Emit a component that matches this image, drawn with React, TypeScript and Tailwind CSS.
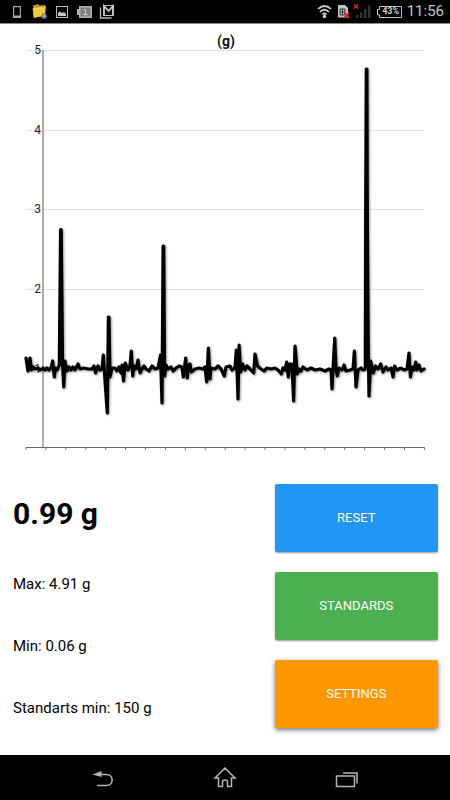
import clsx from "clsx";

const trace: [number, number][] = [
  [26, 358], [28, 371], [30, 358], [31.5, 370], [33, 367], [35, 369], [38, 368], [40, 370], [43, 368], [45, 370], [47, 368], [49, 370],
  [51, 368], [52.7, 361], [54.3, 377], [55.5, 368], [57, 370], [59.3, 365], [60.6, 229.5], [61.2, 229.5], [62.6, 365], [63.7, 387],
  [65, 361], [67, 371], [69, 367], [71, 370], [73, 367], [75, 370], [78, 364], [80, 369], [84, 368], [88, 369], [92, 369], [94, 366],
  [95.5, 373], [98, 366], [100, 370], [102, 369], [103.3, 355], [105.3, 385], [107.3, 413], [108.4, 317], [109, 317], [110, 377],
  [112, 368], [115, 368], [117, 371], [119, 367], [121, 373], [122, 365], [123.5, 381], [125.3, 363], [128, 370], [130, 366],
  [131.3, 351], [132.7, 376], [134, 366], [136, 369], [138, 360], [140, 373], [142, 369], [144, 366], [146, 369], [149, 371],
  [152, 366], [155, 369], [158, 368], [160.5, 355], [162, 403], [163.1, 246], [163.7, 246], [164.6, 376], [166, 365], [168, 369],
  [171, 367], [173, 371], [176, 368], [179, 366], [182, 367], [183.3, 377], [185.7, 358], [187.2, 378], [188.5, 366], [190, 364],
  [191.3, 372], [195, 369], [199, 368], [203, 369], [205, 367], [206.7, 382], [208.4, 348], [210, 379], [211, 368], [215, 369],
  [218, 366], [221, 369], [224.3, 376], [226, 367], [230, 366], [232, 370], [235, 368], [236.3, 350], [238, 399], [239.1, 345],
  [240.7, 372], [242.7, 364], [245, 370], [247, 366], [250, 369], [253.7, 373], [255, 354], [257.5, 366], [261, 369], [264, 371],
  [267, 368], [271, 369], [275, 368], [278, 370], [281.3, 374], [283, 368], [285, 370], [286.7, 362], [288.3, 377], [290, 364],
  [292, 364], [293.6, 401], [295, 346], [297.3, 374], [299, 369], [301, 371], [303, 367], [307, 370], [311, 368], [315, 370],
  [320, 369], [325, 371], [329, 369], [331, 370], [332, 389], [334.7, 338], [336, 369], [337.3, 376], [339, 368], [342, 370],
  [344, 365], [346, 371], [350, 370], [353, 369], [354.4, 351], [356, 387], [358, 370], [361, 368], [363, 370], [365.3, 369],
  [365.6, 230], [366.3, 69], [366.9, 69], [367.4, 230], [368.2, 340], [369, 396], [370.7, 361], [373.3, 373], [375.5, 366],
  [378, 369], [380.7, 364], [383, 372], [386, 367], [388, 370], [391, 368], [393, 377], [394.5, 366], [397, 370], [401, 368],
  [404, 370], [407, 369], [409, 353], [410.4, 377], [412, 367], [414, 370], [415.7, 362], [417, 370], [419, 365], [421, 371], [424, 369],
];

const gridLines = [
  { label: "5", y: 50 },
  { label: "4", y: 130 },
  { label: "3", y: 209 },
  { label: "2", y: 289 },
  { label: "1", y: 369 },
];

const ticks = Array.from({ length: 21 }, (_, i) => 26 + i * 19.92);

const readings = ["Max: 4.91 g", "Min: 0.06 g", "Standarts min: 150 g"];

const actions = [
  { label: "RESET", color: "bg-[#2196f3]", shadow: "shadow-[0_1px_2px_rgba(0,0,0,0.4)]" },
  { label: "STANDARDS", color: "bg-[#4caf50]", shadow: "shadow-[0_1px_2px_rgba(0,0,0,0.4)]" },
  { label: "SETTINGS", color: "bg-[#ff9800]", shadow: "shadow-[0_2px_5px_rgba(0,0,0,0.55)]" },
];

const StatusBar = () => {
  return (
    <header className="flex h-6 items-center justify-between border-b border-[#8a8a8a] bg-black pr-1 pl-3 text-[#b8b8b8]">
      <svg width="104" height="20" viewBox="12 2 104 20" fill="none" aria-hidden="true">
        {/* phone */}
        <path d="M13 6h8v12h-8zM14.2 7.200v8.300h5.600V7.200z" fill="#a8a8a8" fillRule="evenodd" />
        {/* folder */}
        <path d="M33 5.500l5-1.500 1.500 1.500 5.500-.5V14l-1.500 2.500-10 1z" fill="#c89420" />
        <path d="M32.500 8.500l10.500-1 3-1.500-1 9-11 3z" fill="#f0c83e" />
        <path d="M34 8.500l9-.8" stroke="#ffe88a" />
        <circle cx="44" cy="16" r="2.500" fill="#707a7a" stroke="#8fa39c" strokeDasharray="1.500 1" />
        <circle cx="44" cy="16" r="1" fill="#c9d6d0" />
        {/* picture */}
        <rect x="56.500" y="6.500" width="11" height="11" stroke="#b8b8b8" />
        <path d="M58 16v-3l2-1.500 2 1.500 2-1 2 2v2z" fill="#c8c8c8" />
        {/* battery */}
        <path d="M79 6h13v12H79v-3h-2V9h2z" fill="#b0b0b0" />
        <path d="M80.500 7.500h10v9h-10z" fill="#808080" />
        <path d="M84 9.500h1.500v4.500M83.500 14.500h4" stroke="#ccc" />
        {/* mail */}
        <path d="M100.500 7.500v10.500h11" stroke="#b8b8b8" strokeWidth="1.300" />
        <path d="M104 15V6l4.500 5L113 6v9" stroke="#d0d0d0" strokeWidth="1.800" />
        <path d="M103.500 5.500h10v10h-10z" stroke="#c0c0c0" />
      </svg>
      <div className="flex items-center gap-1">
        <svg width="54" height="20" viewBox="317 2 54 20" fill="none" aria-hidden="true">
          {/* wifi */}
          <path d="M318 9q6.500-6 13 0M320 12q4.500-4.500 9 0M322.500 14.500q2-2 4 0" stroke="#c8c8c8" strokeWidth="1.700" />
          <circle cx="324.500" cy="16.500" r="1.700" fill="#d0d0d0" />
          {/* sim card */}
          <path d="M338 5h7l3 3v9.500h-10z" fill="#c4c4c4" />
          <path d="M340 9h5v6h-5zM340 12h5M342.500 9v6" stroke="#333" />
          <path d="M344.500 13l4.500 4.500M349 13l-4.500 4.500" stroke="#e02020" strokeWidth="1.800" />
          {/* signal */}
          <path d="M354 4.500l4 4M358 4.500l-4 4" stroke="#e02020" strokeWidth="1.600" />
          <path d="M356 15h2.500v3H356zM360 12.500h2.500V18H360zM364 9h2.500v9H364zM368 5.500h2.500V18H368z" fill="#333" />
        </svg>
        <div className="relative flex h-4 w-7 items-center justify-center">
          <svg className="absolute inset-0" width="28" height="16" viewBox="0 0 28 16" fill="none" aria-hidden="true">
            <path d="M4.500 2.500h22v11h-22V11h-2V5.500h2z" stroke="#c0c0c0" />
          </svg>
          <span className="pl-1 text-[9px] leading-none font-bold text-[#d0d0d0]">43%</span>
        </div>
        <span className="pr-0.5 text-[15px] leading-none text-[#c4c4c4]">11:56</span>
      </div>
    </header>
  );
};

const Chart = () => {
  return (
    <svg className="block w-full" viewBox="0 24 450 436" fill="none" role="img" aria-label="(g)">
      {gridLines.map(({ label, y }) => (
        <g key={label}>
          <path d={`M26 ${y + 0.5}H424`} stroke="#e2e2e2" />
          <text x="41" y={y + 4} textAnchor="end" fontSize="12" fill="#222">
            {label}
          </text>
        </g>
      ))}
      <text x="226" y="46" textAnchor="middle" fontSize="14" fontWeight="700" fill="#111">
        (g)
      </text>
      <path d="M43 50V448" stroke="#8c8c8c" strokeWidth="1.400" />
      <path d="M26 447.500H424.500" stroke="#666" />
      {ticks.map((x) => (
        <path key={x} d={`M${x} 447v3`} stroke="#777" />
      ))}
      <polyline
        className="drop-shadow-[1px_1px_1px_rgba(0,0,0,0.4)]"
        points={trace.map((p) => p.join(",")).join(" ")}
        stroke="#000"
        strokeWidth="3.200"
        strokeLinecap="round"
        strokeLinejoin="round"
      />
    </svg>
  );
};

const NavBar = () => {
  return (
    <nav className="flex h-[45px] items-center justify-around bg-black px-[42px] text-[#b5b5b5]">
      <button type="button" aria-label="Back">
        <svg width="24" height="24" viewBox="0 0 24 24" fill="none">
          <path d="M8 8.500h7.500c7.500 0 7.500 11 0 11H6" stroke="currentColor" strokeWidth="1.600" />
          <path d="M1.500 8.500l9-3.500v6z" fill="currentColor" />
        </svg>
      </button>
      <button type="button" aria-label="Home">
        <svg width="24" height="24" viewBox="0 0 24 24" fill="none" stroke="currentColor" strokeWidth="1.500">
          <path d="M12 2L2 12h3.500v8.500h4V16q0-2 2.500-2t2.500 2v4.500h4V12H22z" />
        </svg>
      </button>
      <button type="button" aria-label="Recent apps">
        <svg width="24" height="24" viewBox="0 0 24 24" fill="none" stroke="currentColor" strokeWidth="1.500">
          <path d="M1.500 10h18v10.500h-18zM8 7h14v10.500" />
        </svg>
      </button>
    </nav>
  );
};

const App = () => {
  return (
    <div className="flex min-h-screen flex-col bg-white font-[Roboto,sans-serif] text-black">
      <StatusBar />
      <main className="flex-1">
        <Chart />
        <section className="flex justify-between gap-4 pt-6 pr-3 pl-[13px]">
          <div>
            <h1 className="flex h-15 items-center text-3xl font-bold">0.99 g</h1>
            <div className="mt-[9px]">
              {readings.map((text) => (
                <p key={text} className="flex h-[62px] items-center text-[15px]">
                  {text}
                </p>
              ))}
            </div>
          </div>
          <div className="flex w-5/13 flex-col gap-5">
            {actions.map(({ label, color, shadow }) => (
              <button key={label} type="button" className={clsx("h-[68px] rounded-xs text-[13px] text-white", color, shadow)}>
                {label}
              </button>
            ))}
          </div>
        </section>
      </main>
      <NavBar />
    </div>
  );
};

export default App;
